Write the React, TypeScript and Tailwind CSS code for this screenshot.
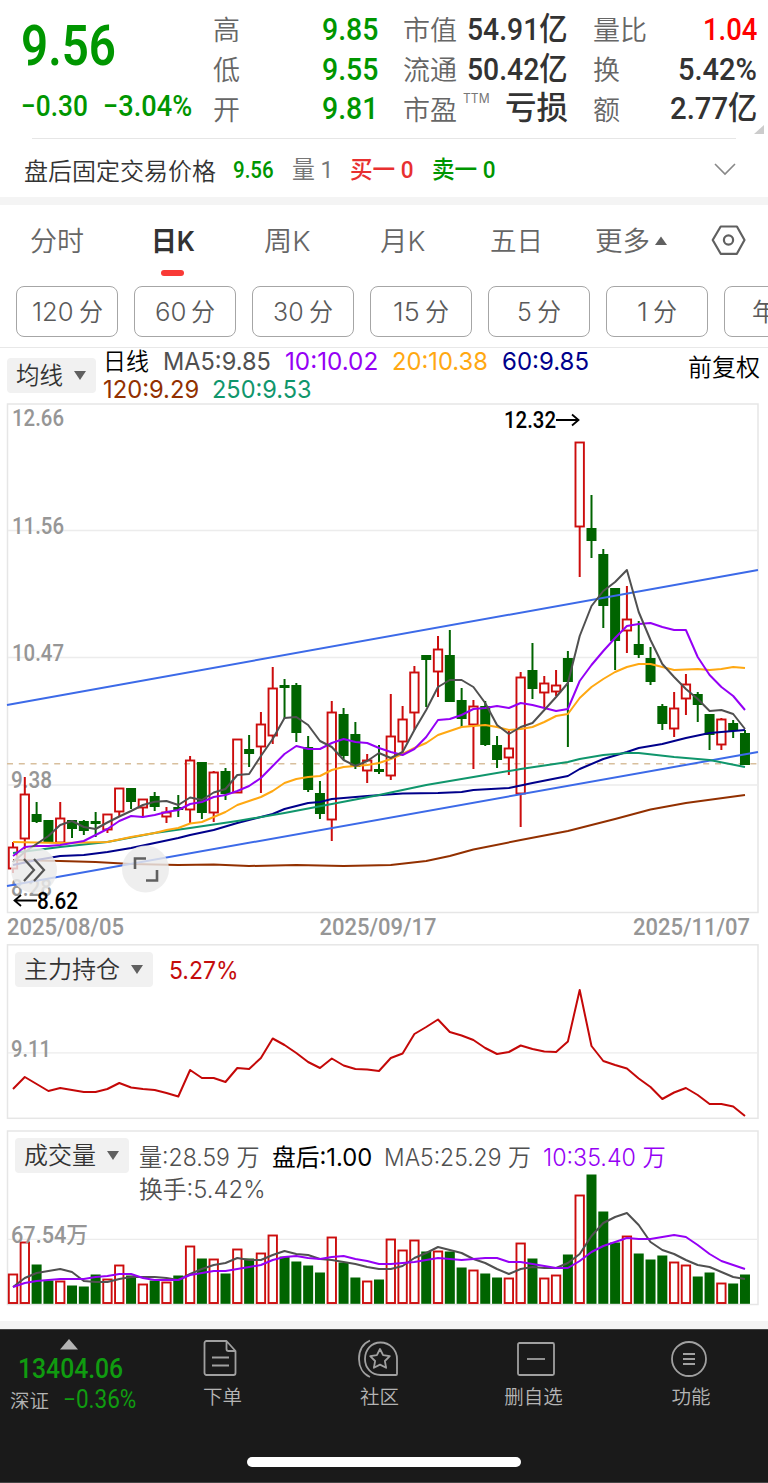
import { useLayoutEffect, useRef } from 'react';
import type { ReactNode } from 'react';

const DIN = "font-['Roboto','Noto_Sans_CJK_SC',sans-serif]";
const UI = "font-['Inter','Noto_Sans_CJK_SC',sans-serif]";

/** Text squeezed or stretched horizontally to the width of its box. */
function Fit({ className, children }: { className: string; children: ReactNode }) {
  const box = useRef<HTMLSpanElement>(null);
  const text = useRef<HTMLSpanElement>(null);
  useLayoutEffect(() => {
    if (!box.current || !text.current) return;
    const ratio = box.current.clientWidth / text.current.offsetWidth;
    text.current.style.transform = `scaleX(${ratio})`;
  }, []);
  return (
    <span ref={box} className={'block shrink-0 whitespace-nowrap ' + className}>
      <span ref={text} className="inline-block origin-left">{children}</span>
    </span>
  );
}

// [rising, body top, body bottom, high, low]
type Candle = [number, number, number, number, number];
const candles: Candle[] = [
  [1, 847, 869, 842, 873], [1, 794, 839, 777, 860], [0, 814, 822, 802, 823], [0, 820, 843, 820, 843],
  [1, 818, 843, 802, 843], [0, 820, 829, 820, 838], [0, 821, 831, 820, 835], [0, 821, 824, 812, 837],
  [1, 814, 830, 814, 833], [1, 788, 812, 788, 817], [0, 788, 802, 788, 809], [1, 799, 808, 799, 816],
  [0, 796, 807, 792, 811], [1, 812, 817, 807, 823], [0, 807, 810, 795, 817], [1, 760, 810, 756, 823],
  [0, 762, 813, 762, 819], [1, 772, 813, 771, 822], [0, 771, 794, 768, 800], [1, 739, 793, 739, 793],
  [0, 749, 754, 735, 767], [1, 724, 747, 712, 793], [1, 688, 736, 667, 744], [0, 685, 688, 679, 719],
  [0, 685, 733, 683, 742], [0, 747, 790, 736, 792], [0, 793, 814, 781, 819], [1, 712, 820, 701, 841],
  [0, 714, 756, 708, 760], [0, 734, 767, 722, 769], [1, 760, 771, 754, 783], [0, 769, 772, 745, 774],
  [1, 736, 776, 694, 780], [1, 719, 742, 706, 753], [1, 672, 713, 666, 730], [0, 655, 660, 655, 707],
  [1, 649, 672, 636, 697], [0, 655, 702, 630, 702], [0, 700, 719, 688, 727], [1, 706, 725, 700, 769],
  [0, 706, 745, 701, 746], [0, 745, 760, 736, 768], [1, 748, 758, 731, 775], [1, 677, 794, 672, 827],
  [0, 670, 689, 643, 699], [1, 683, 693, 676, 707], [1, 685, 692, 670, 696], [0, 658, 682, 651, 747],
  [1, 442, 527, 442, 577], [0, 528, 541, 495, 558], [0, 554, 606, 549, 628], [0, 588, 641, 588, 670],
  [1, 619, 631, 586, 653], [0, 644, 655, 621, 658], [0, 658, 682, 647, 685], [0, 706, 724, 704, 730],
  [1, 708, 729, 692, 737], [1, 684, 699, 674, 715], [0, 694, 705, 692, 722], [0, 714, 735, 714, 750],
  [1, 719, 745, 718, 750], [0, 723, 731, 720, 738], [0, 733, 765, 730, 765],
];

const ma5 = [862, 852, 844, 836, 825, 821, 827, 829, 822.5, 816.5, 811, 805, 801.7, 801, 805, 797.5, 800, 792.5, 789, 775, 774, 756, 739, 718, 717, 725, 741, 747, 760, 766, 761, 753, 758, 752, 730, 710, 687, 680, 680, 687, 703, 725, 734, 727, 723, 710, 697, 683, 636, 606, 591, 582, 570, 612, 640, 664, 677, 689, 699, 711, 710, 714, 729];
const ma10 = [856, 847, 846, 846, 845, 843, 841, 835, 829, 821, 816, 817, 815, 812, 810, 804, 802, 797, 795, 791, 786, 778, 766, 754, 746, 749, 749, 743, 739, 742, 743, 748, 752, 755, 749, 737, 720, 719, 715, 709, 708, 706, 708, 703, 705, 708, 711, 709, 681, 665, 651, 638, 626, 624, 623, 627, 630, 630, 657, 675, 687, 696, 710];
const holding = [1089, 1077, 1084, 1091, 1088, 1090, 1092, 1092, 1089, 1083, 1087.5, 1089, 1090, 1093, 1096.5, 1070, 1078, 1078, 1082, 1068, 1069, 1058, 1038.5, 1045, 1053, 1062, 1068, 1058.5, 1065.5, 1069, 1069.5, 1071, 1058, 1053.5, 1034, 1027, 1019.5, 1032, 1035.5, 1040, 1048, 1054, 1052, 1045.5, 1049, 1051.5, 1052, 1041.5, 990, 1046, 1061, 1065, 1068.5, 1078.5, 1087, 1099, 1092.5, 1088, 1095, 1104, 1104, 1106.5, 1116];
const volume = [1274, 1242, 1265, 1281, 1281, 1286, 1287, 1275, 1279, 1265, 1276, 1284, 1281, 1282, 1276, 1246, 1259, 1259, 1274, 1249, 1259, 1253, 1235, 1257, 1262, 1266, 1273, 1237, 1263, 1278, 1281, 1280, 1239, 1250, 1240, 1252, 1251, 1252, 1268, 1270, 1274, 1278, 1278, 1243, 1259, 1278, 1275, 1255, 1195, 1175, 1212, 1243, 1236, 1254, 1260, 1256, 1262, 1265, 1277, 1273, 1283, 1284, 1275];
const vol5 = [1287, 1278, 1273, 1271, 1269, 1272, 1281, 1282, 1282, 1279, 1277, 1277, 1277, 1278, 1280, 1274, 1269, 1265, 1263, 1258, 1260, 1260, 1255, 1251, 1254, 1255, 1259, 1260, 1262, 1264, 1267, 1269, 1269, 1266, 1258, 1253, 1247, 1250, 1253, 1259, 1263, 1269, 1274, 1269, 1267, 1268, 1268, 1263, 1254, 1236, 1223, 1217, 1213, 1225, 1242, 1250, 1254, 1260, 1265, 1267, 1272, 1277, 1279];
const vol10 = [1287, 1283, 1281, 1280, 1279, 1279, 1279, 1277, 1276, 1274, 1274, 1278, 1280, 1280, 1280, 1275, 1273, 1271, 1271, 1269, 1267, 1265, 1260, 1257, 1256, 1258, 1259, 1257, 1256, 1259, 1261, 1264, 1264, 1263, 1262, 1260, 1258, 1259, 1260, 1259, 1258, 1258, 1262, 1262, 1264, 1266, 1268, 1268, 1261, 1252, 1246, 1242, 1238, 1239, 1239, 1237, 1235, 1237, 1245, 1254, 1261, 1265, 1269];

// Slower averages, sampled as [day, y]
const ma20: [number, number][] = [[0, 842], [4, 843], [8, 842], [10, 837], [12, 833], [13, 830], [14, 828], [15, 823.5], [16, 822], [17, 817], [18, 812], [19, 805], [20, 801], [21, 797], [22, 791], [23, 783], [24, 779], [25, 777], [26, 776], [27, 770], [28, 767], [29, 766], [30, 765], [31, 763], [32, 759], [33, 754], [34, 748], [35, 743], [36, 735], [38, 727], [39, 726], [40, 725], [41, 727], [42, 730], [43, 729], [44, 727], [45, 722], [46, 716], [47, 714], [48, 698], [49, 687], [50, 679], [51, 672], [52, 667], [53, 664], [54, 664], [55, 667], [56, 670], [58, 669], [59, 670], [60, 669], [61, 667], [62, 668]];
const ma60: [number, number][] = [[0, 865], [2, 860], [4, 856], [6, 855], [8, 852], [10, 848], [12, 843], [14, 838], [15, 835], [17, 830], [19, 823], [21, 817], [22, 814], [23, 809], [24, 806], [25, 803], [26, 802], [27, 799], [30, 796], [33, 793.5], [36, 793], [38, 792], [39, 790], [42, 788], [44, 783], [47, 776], [48, 769], [50, 759], [52, 752], [53, 748], [55, 744], [57, 738], [59, 733], [60, 732], [62, 730]];
const ma120: [number, number][] = [[0, 860], [4, 861], [7, 862], [10, 864], [14, 865], [17, 864.5], [20, 866], [24, 865], [28, 866], [32, 865], [35, 861], [37, 856], [39, 849.5], [43, 840], [47, 831], [48, 828], [51, 819], [54, 809.5], [57, 803], [62, 795]];
const ma250: [number, number][] = [[0, 853], [4, 847], [8, 842], [12, 833], [15, 828], [19, 821], [23, 813], [27, 804], [31, 795], [35, 785], [39, 777], [43, 769], [47, 762], [48, 759], [50, 755], [52, 753], [53, 753], [56, 757], [59, 760], [62, 767]];

const dayX = (i: number) => 13 + i * 11.806;
const daily = (ys: number[]) => ys.map((y, i) => `${dayX(i).toFixed(1)},${y}`).join(' ');
const sampled = (ps: [number, number][]) => ps.map(([i, y]) => `${dayX(i).toFixed(1)},${y}`).join(' ');

const RED = '#cc0d0d';
const GREEN = '#006400';

function Line({ points, color }: { points: string; color: string }) {
  return <polyline points={points} fill="none" stroke={color} strokeWidth="2" strokeLinejoin="round" />;
}

function Label({ x, y, w, color = '#969696', children }: {
  x: number; y: number; w: number; color?: string; children: string;
}) {
  return (
    <text x={x} y={y} textLength={w} lengthAdjust="spacingAndGlyphs" fontSize="23" fontWeight="500" fill={color} className={DIN}>
      {children}
    </text>
  );
}

function Caret({ up }: { up?: boolean }) {
  return (
    <svg className="block shrink-0" width="12" height="9" viewBox="0 0 12 9">
      <path d={up ? 'M6 .5 12 9H0Z' : 'M0 0h12L6 9Z'} fill="#606060" />
    </svg>
  );
}

function Picker({ label, w, className }: { label: string; w: string; className: string }) {
  return (
    <button className={'flex h-[35px] shrink-0 items-center rounded bg-[#f1f1f1] pl-[9px] text-[24px] leading-none font-[350] text-[#333] ' + className}>
      <Fit className={'pt-px ' + w}>{label}</Fit>
      <span className="ml-[11px]"><Caret /></span>
    </button>
  );
}

function Header() {
  const key = 'text-[27px] leading-[40px] text-[#666] font-[350] ';
  const num = DIN + ' text-[32px] leading-[40px] font-medium ';
  return (
    <section className="relative h-[139px] pt-[9px] pl-[21px]">
      <div className="flex">
        <div className="w-[192px] text-[#009600]">
          <Fit className={DIN + ' w-[95px] h-[73px] text-[55px] leading-[75px] font-semibold'}>9.56</Fit>
          <div className={DIN + ' flex h-[48px] gap-[15px] text-[29px] leading-[48px] font-medium'}>
            <Fit className="w-[67px]">−0.30</Fit>
            <Fit className="w-[89px]">−3.04%</Fit>
          </div>
        </div>
        <div className={'w-[109px] ' + key}>
          <div>高</div><div>低</div><div>开</div>
        </div>
        <div className={'w-[81px] text-[#009600] ' + num}>
          <Fit className="w-[56px]">9.85</Fit>
          <Fit className="w-[56px]">9.55</Fit>
          <Fit className="w-[56px] -mt-px">9.81</Fit>
        </div>
        <div className="w-[190px]">
          <div className="flex"><span className={'w-[64px] ' + key}>市值</span><Fit className={'w-[101px] text-[#333] ' + num}>54.91亿</Fit></div>
          <div className="flex"><span className={'w-[64px] ' + key}>流通</span><Fit className={'w-[101px] text-[#333] ' + num}>50.42亿</Fit></div>
          <div className="flex">
            <span className={'w-[60px] ' + key}>市盈</span>
            <Fit className={UI + ' w-[27px] text-[13px] leading-[18px] text-[#777]'}>TTM</Fit>
            <Fit className={'ml-[15px] -mt-px w-[63px] text-[#333] ' + num}>亏损</Fit>
          </div>
        </div>
        <div className={'w-[59px] ' + key}>
          <div>量比</div><div>换</div><div>额</div>
        </div>
        <div className={'flex w-[105px] flex-col items-end text-[#333] ' + num}>
          <Fit className="w-[54px] text-[#f00]">1.04</Fit>
          <Fit className="w-[79px]">5.42%</Fit>
          <Fit className="w-[87px] -mt-px">2.77亿</Fit>
        </div>
      </div>
      <svg className="absolute top-[125px] right-[4px]" width="10" height="9"><path d="M10 0v9H0z" fill="#ccc" /></svg>
      <div className="absolute bottom-0 left-8 h-px w-[704px] bg-[#e6e6e6]" />
    </section>
  );
}

function AfterHours() {
  return (
    <section className="flex h-[58px] items-center pt-[3px] pl-6 text-[24px] leading-none">
      <Fit className="w-[192px] font-[350] text-[#333]">盘后固定交易价格</Fit>
      <Fit className={DIN + ' ml-[17px] w-[41px] font-medium text-[#009600]'}>9.56</Fit>
      <Fit className={DIN + ' ml-[18px] w-[41px] text-[#777]'}>量 1</Fit>
      <Fit className={DIN + ' ml-[17px] w-[64px] font-medium text-[#e83030]'}>买一 0</Fit>
      <Fit className={DIN + ' ml-[18px] w-[64px] font-medium text-[#009600]'}>卖一 0</Fit>
      <svg className="ml-[218px] block" width="22" height="13"><path d="M1 1l10 10L21 1" fill="none" stroke="#888" strokeWidth="1.6" /></svg>
    </section>
  );
}

function Tabs() {
  const t = 'text-[27px] leading-[42px] font-[350] ';
  return (
    <nav className={UI + ' flex h-[81px] pt-[16px] pl-[30px] text-[#666]'}>
      <div className="w-[121px]"><Fit className={t + 'w-[54px]'}>分时</Fit></div>
      <div className="w-[113px]">
        <Fit className="w-[44px] text-[27px] leading-[42px] font-semibold text-[#333]">日K</Fit>
        <div className="mt-[7px] ml-[10px] h-[6px] w-[23px] rounded-full bg-[#f93a36]" />
      </div>
      <div className="w-[116px]"><Fit className={t + 'w-[46px]'}>周K</Fit></div>
      <div className="w-[110px]"><Fit className={t + 'w-[45px]'}>月K</Fit></div>
      <div className="w-[105px]"><Fit className={t + 'w-[53px]'}>五日</Fit></div>
      <div className="flex w-[116px]"><Fit className={t + 'w-[55px]'}>更多</Fit><span className="mt-[15px] ml-[5px]"><Caret up /></span></div>
      <svg className="mt-[3px] block" width="35" height="32" viewBox="0 0 35 32" fill="none" stroke="#606060" strokeWidth="2.2" strokeLinejoin="round">
        <path d="M9.7 2.5h16.2L33.5 16l-7.6 13.8H9.7L1.7 16Z" /><circle cx="17.5" cy="16" r="4.6" />
      </svg>
    </nav>
  );
}

const periods: [string, string][] = [['120', 'w-[42px]'], ['60', 'w-[31px]'], ['30', 'w-[31px]'], ['15', 'w-[27px]'], ['5', 'w-[15px]'], ['1', 'w-[11px]']];

function Periods() {
  return (
    <div className={UI + ' flex h-[62px] gap-4 overflow-hidden border-b border-[#e8e8e8] pl-4 text-[25px] leading-[50px] font-[350] text-[#5a5a5a]'}>
      {periods.map(([p, w]) => (
        <div key={p} className="flex h-[51px] w-[102px] shrink-0 justify-center gap-[5px] rounded-lg border border-[#a6a6a6]">
          <Fit className={w}>{p}</Fit><Fit className="w-[24px]">分</Fit>
        </div>
      ))}
      <div className="h-[51px] w-[102px] shrink-0 rounded-lg border border-[#a6a6a6] pl-[27px]">年K</div>
    </div>
  );
}

function Averages() {
  return (
    <div className={UI + ' flex h-[55px] pl-[7px] text-[24px] leading-[28px]'}>
      <div className="pt-[10px]"><Picker label="均线" w="w-[47px]" className="w-[89px]" /></div>
      <div className="ml-[7px] w-[585px]">
        <div className="flex h-[28px]">
          <Fit className="w-[46px] font-[350] text-black">日线</Fit>
          <Fit className="ml-[14px] w-[108px] text-[#505050]">MA5:9.85</Fit>
          <Fit className="ml-[14px] w-[93px] text-[#9500f5]">10:10.02</Fit>
          <Fit className="ml-[14px] w-[96px] text-[#ffa812]">20:10.38</Fit>
          <Fit className="ml-[14px] w-[87px] text-[#00008b]">60:9.85</Fit>
        </div>
        <div className="flex h-[27px] leading-[27px]">
          <Fit className="w-[96px] text-[#923000]">120:9.29</Fit>
          <Fit className="ml-[13px] w-[100px] text-[#10966c]">250:9.53</Fit>
        </div>
      </div>
      <Fit className="mt-[6px] w-[72px] font-[350] text-black">前复权</Fit>
    </div>
  );
}

function MainChart() {
  return (
    <div className="h-[541px]">
      <svg className="block" width="768" height="541" viewBox="0 403 768 541">
        <rect x="7.5" y="404" width="750.5" height="508.5" fill="none" stroke="#e6e6e6" strokeWidth="1.5" />
        <path d="M8 530.5H758M8 657.5H758M8 785H758" stroke="#ececec" strokeWidth="1.3" />
        <path d="M7 763.7H758" stroke="#d8bf9d" strokeWidth="1.4" strokeDasharray="6 5.8" />
        <Label x={12} y={426} w={52}>12.66</Label>
        <Label x={12} y={534} w={52}>11.56</Label>
        <Label x={12} y={661} w={52}>10.47</Label>
        <Label x={11} y={788} w={41}>9.38</Label>
        <Label x={11} y={896} w={41}>8.28</Label>
        {candles.map(([up, t, b, h, l], i) => {
          const x = dayX(i);
          const c = up ? RED : GREEN;
          return (
            <g key={i} stroke={c} strokeWidth="2">
              {up ? <path d={`M${x} ${h}V${t}M${x} ${b}V${l}`} /> : <path d={`M${x} ${h}V${l}`} />}
              {up
                ? <rect x={x - 4.2} y={t + 0.5} width="8.4" height={Math.max(b - t - 1, 1)} fill="none" strokeWidth="1.9" />
                : <rect x={x - 5} y={t} width="10" height={b - t} fill={c} stroke="none" />}
            </g>
          );
        })}
        <Line points={sampled(ma120)} color="#923000" />
        <path d="M7 705 758 570M7 886 758 752" stroke="#3c6ae8" strokeWidth="2" />
        <Line points={sampled(ma60)} color="#00008b" />
        <Line points={sampled(ma250)} color="#10966c" />
        <Line points={sampled(ma20)} color="#ffa812" />
        <Line points={daily(ma10)} color="#9500f5" />
        <Line points={daily(ma5)} color="#505050" />
        <Label x={504} y={428} w={52} color="#000">12.32</Label>
        <path d="M556 420h22M572 414.5l6.500 5.500-6.500 5.500" stroke="#000" strokeWidth="1.8" fill="none" />
        <circle cx="34" cy="870" r="23" fill="#eaeaea" fillOpacity=".82" />
        <circle cx="145.5" cy="869" r="23.5" fill="#eaeaea" fillOpacity=".82" />
        <path d="M24 859l10 11-10 11M34 859l10 11-10 11" stroke="#555" strokeWidth="2.2" fill="none" />
        <path d="M135 869v-10.5h11M157 870v10.5h-11" stroke="#606060" strokeWidth="2.6" fill="none" />
        <path d="M37 900.5H14.500M21 895l-6.500 5.500 6.500 5.500" stroke="#000" strokeWidth="1.8" fill="none" />
        <Label x={37} y={908.5} w={41} color="#000">8.62</Label>
        <Label x={7} y={935} w={117}>2025/08/05</Label>
        <Label x={319.5} y={935} w={117}>2025/09/17</Label>
        <Label x={633} y={935} w={117}>2025/11/07</Label>
      </svg>
    </div>
  );
}

function HoldingChart() {
  return (
    <div className="relative h-[186px]">
      <svg className="block" width="768" height="186" viewBox="0 944 768 186">
        <rect x="7.5" y="944.8" width="750.5" height="173.5" fill="none" stroke="#e6e6e6" strokeWidth="1.5" />
        <path d="M8 1052.8H758" stroke="#ececec" strokeWidth="1.3" />
        <Label x={11} y={1056.5} w={40}>9.11</Label>
        <Line points={daily(holding)} color="#c40808" />
      </svg>
      <div className={UI + ' absolute top-[8px] left-[15px] flex items-center text-[24px] leading-none'}>
        <Picker label="主力持仓" w="w-[96px]" className="w-[138px]" />
        <Fit className="ml-[16px] w-[70px] pt-[2px] text-[#c40c0c]">5.27%</Fit>
      </div>
    </div>
  );
}

function VolumeChart() {
  return (
    <div className="relative h-[191px]">
      <svg className="block" width="768" height="191" viewBox="0 1130 768 191">
        <rect x="7.5" y="1131" width="750.5" height="173.5" fill="none" stroke="#e6e6e6" strokeWidth="1.5" />
        <path d="M8 1239.3H758" stroke="#ececec" strokeWidth="1.3" />
        {volume.map((t, i) => candles[i][0]
          ? <rect key={i} x={dayX(i) - 4.2} y={t + 0.5} width="8.4" height={1302.5 - t} fill="#fff" stroke={RED} strokeWidth="1.9" />
          : <rect key={i} x={dayX(i) - 5} y={t - 0.5} width="10" height={1304.3 - t} fill={GREEN} />)}
        <Label x={11} y={1242.5} w={77}>67.54万</Label>
        <Line points={daily(vol5)} color="#505050" />
        <Line points={daily(vol10)} color="#9500f5" />
      </svg>
      <div className={UI + ' absolute top-[8px] left-[15px] flex text-[24px] leading-[38px] font-[350] text-[#505050]'}>
        <Picker label="成交量" w="w-[72px]" className="w-[114px]" />
        <div className="ml-[10px] pt-px">
          <div className="flex h-[33px]">
            <Fit className="w-[121px]">量:28.59 万</Fit>
            <Fit className="ml-[12px] w-[100px] font-normal text-black">盘后:1.00</Fit>
            <Fit className="ml-[12px] w-[147px]">MA5:25.29 万</Fit>
            <Fit className="ml-[12px] w-[123px] text-[#9500f5]">10:35.40 万</Fit>
          </div>
          <Fit className="w-[126px] leading-[36px]">换手:5.42%</Fit>
        </div>
      </div>
    </div>
  );
}

function BottomBar() {
  const item = 'flex h-[79px] shrink-0 flex-col items-center';
  const cap = 'mt-auto text-[19.5px] leading-[26px] text-[#b4b4b4] font-[350]';
  const svg = { width: 40, height: 40, fill: 'none', stroke: '#a0a0a0', strokeWidth: 1.8, strokeLinejoin: 'round' as const };
  return (
    <footer className="relative h-[154px] border-t border-[#444] bg-[#1a1a1a]">
      <div className="flex h-[80px]">
        <div className="w-[153px] shrink-0">
          <svg className="mt-[9px] ml-[60px] block" width="18" height="11"><path d="M9 0l9 10.500H0z" fill="#b4b4b4" /></svg>
          <Fit className={DIN + ' ml-[18px] w-[105px] text-[28px] leading-[38px] font-medium text-[#109c10]'}>13404.06</Fit>
          <div className="-mt-[2px] flex pl-[10px] text-[19.5px] leading-[28px]">
            <Fit className="w-[39px] font-[350] text-[#b4b4b4]">深证</Fit>
            <Fit className={DIN + ' ml-[14px] w-[73px] text-[25px] text-[#109c10]'}>−0.36%</Fit>
          </div>
        </div>
        <div className={item + ' w-[139px]'}>
          <svg {...svg} className="mt-[9px] -ml-[4px]"><path d="M5.500 2h20l9 10v22a2 2 0 0 1-2 2h-27a2 2 0 0 1-2-2V4a2 2 0 0 1 2-2ZM25.500 2v8a2 2 0 0 0 2 2h7M11 18.500h17M11 26.500h17" /></svg>
          <div className={cap}>下单</div>
        </div>
        <div className={item + ' w-[175px]'}>
          <svg {...svg} className="mt-[9px] -ml-[3px]"><path d="M22.500 3.500C13 3.500 7 11 7 20s6.500 16 15.500 16H38a1 1 0 0 0 1-1V20C39 11 32 3.500 22.500 3.500Z" /><path d="M12 1.500C4 5 1 12 1 20s4 15 11 18" /><path d="m22 10 3.100 6.200 6.700 1-4.900 4.800 1.200 6.800-6.100-3.200-6.100 3.200 1.200-6.800-4.900-4.800 6.700-1Z" /></svg>
          <div className={cap}>社区</div>
        </div>
        <div className={item + ' w-[133px]'}>
          <svg {...svg} className="mt-[9px] ml-[4px]"><rect x="2" y="4" width="36" height="32" rx="1.500" /><path d="M11 20h18" /></svg>
          <div className={cap}>删自选</div>
        </div>
        <div className={item + ' w-[154px] pl-[28px]'}>
          <svg {...svg} className="mt-[9px] -ml-[4px]"><circle cx="20" cy="20" r="17" /><path d="M14 15h12M14 20h12M14 25h12" /></svg>
          <div className={cap}>功能</div>
        </div>
      </div>
      <div className="mx-auto mt-[47px] h-[10px] w-[274px] rounded-full bg-white" />
      <div className="absolute bottom-0 h-px w-full bg-[#444]" />
    </footer>
  );
}

export default function App() {
  return (
    <main className="h-[1483px] w-[768px] overflow-hidden bg-white font-['Noto_Sans_CJK_SC',sans-serif]">
      <Header />
      <AfterHours />
      <div className="h-2 bg-[#f4f4f4]" />
      <Tabs />
      <Periods />
      <Averages />
      <MainChart />
      <HoldingChart />
      <VolumeChart />
      <div className="h-2 bg-[#f4f4f4]" />
      <BottomBar />
    </main>
  );
}
